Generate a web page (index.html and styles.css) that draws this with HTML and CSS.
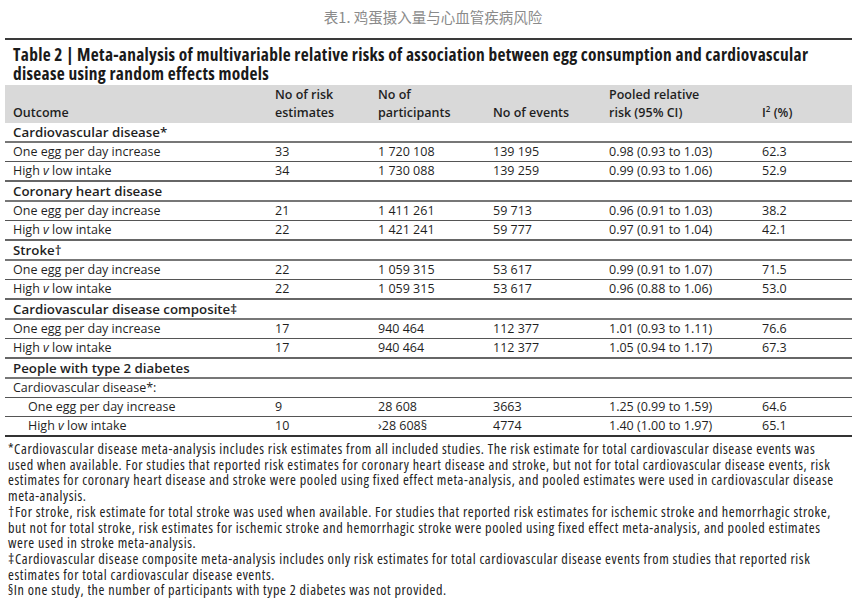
FILE: index.html
```html
<!DOCTYPE html>
<html>
<head>
<meta charset="utf-8">
<link rel="stylesheet" href="styles.css">
</head>
<body>
<div class="caption">表1. 鸡蛋摄入量与心血管疾病风险</div>
<div class="wrap">
  <div class="title">Table 2 | Meta-analysis of multivariable relative risks of association between egg consumption and cardiovascular disease using random effects models</div>
  <table class="tbl">
    <colgroup>
      <col class="c1"><col class="c2"><col class="c3"><col class="c4"><col class="c5"><col class="c6">
    </colgroup>
    <thead>
      <tr>
        <th>Outcome</th>
        <th>No of risk<br>estimates</th>
        <th>No of<br>participants</th>
        <th>No of events</th>
        <th>Pooled relative<br>risk (95% CI)</th>
        <th>I<sup>2</sup> (%)</th>
      </tr>
    </thead>
    <tbody>
      <tr class="sec"><td colspan="6">Cardiovascular disease*</td></tr>
      <tr><td>One egg per day increase</td><td>33</td><td>1 720 108</td><td>139 195</td><td>0.98 (0.93 to 1.03)</td><td>62.3</td></tr>
      <tr class="end"><td>High <i>v</i> low intake</td><td>34</td><td>1 730 088</td><td>139 259</td><td>0.99 (0.93 to 1.06)</td><td>52.9</td></tr>
      <tr class="sec"><td colspan="6">Coronary heart disease</td></tr>
      <tr><td>One egg per day increase</td><td>21</td><td>1 411 261</td><td>59 713</td><td>0.96 (0.91 to 1.03)</td><td>38.2</td></tr>
      <tr class="end"><td>High <i>v</i> low intake</td><td>22</td><td>1 421 241</td><td>59 777</td><td>0.97 (0.91 to 1.04)</td><td>42.1</td></tr>
      <tr class="sec"><td colspan="6">Stroke†</td></tr>
      <tr><td>One egg per day increase</td><td>22</td><td>1 059 315</td><td>53 617</td><td>0.99 (0.91 to 1.07)</td><td>71.5</td></tr>
      <tr class="end"><td>High <i>v</i> low intake</td><td>22</td><td>1 059 315</td><td>53 617</td><td>0.96 (0.88 to 1.06)</td><td>53.0</td></tr>
      <tr class="sec"><td colspan="6">Cardiovascular disease composite‡</td></tr>
      <tr><td>One egg per day increase</td><td>17</td><td>940 464</td><td>112 377</td><td>1.01 (0.93 to 1.11)</td><td>76.6</td></tr>
      <tr class="end"><td>High <i>v</i> low intake</td><td>17</td><td>940 464</td><td>112 377</td><td>1.05 (0.94 to 1.17)</td><td>67.3</td></tr>
      <tr class="sec"><td colspan="6">People with type 2 diabetes</td></tr>
      <tr><td colspan="6">Cardiovascular disease*:</td></tr>
      <tr><td class="ind">One egg per day increase</td><td>9</td><td>28 608</td><td>3663</td><td>1.25 (0.99 to 1.59)</td><td>64.6</td></tr>
      <tr class="last"><td class="ind">High <i>v</i> low intake</td><td>10</td><td>›28 608§</td><td>4774</td><td>1.40 (1.00 to 1.97)</td><td>65.1</td></tr>
    </tbody>
  </table>
  <div class="notes">
    <p>*Cardiovascular disease meta-analysis includes risk estimates from all included studies. The risk estimate for total cardiovascular disease events was used when available. For studies that reported risk estimates for coronary heart disease and stroke, but not for total cardiovascular disease events, risk estimates for coronary heart disease and stroke were pooled using fixed effect meta-analysis, and pooled estimates were used in cardiovascular disease meta-analysis.</p>
    <p>†For stroke, risk estimate for total stroke was used when available. For studies that reported risk estimates for ischemic stroke and hemorrhagic stroke, but not for total stroke, risk estimates for ischemic stroke and hemorrhagic stroke were pooled using fixed effect meta-analysis, and pooled estimates were used in stroke meta-analysis.</p>
    <p>‡Cardiovascular disease composite meta-analysis includes only risk estimates for total cardiovascular disease events from studies that reported risk estimates for total cardiovascular disease events.</p>
    <p>§In one study, the number of participants with type 2 diabetes was not provided.</p>
  </div>
</div>
</body>
</html>
```

FILE: styles.css
```css
html, body {
  margin: 0;
  padding: 0;
  background: #ffffff;
}
body {
  font-family: "Open Sans", "Noto Sans", sans-serif;
  color: #1f1f1f;
}
.caption {
  text-align: center;
  font-family: "Noto Sans CJK SC", "Noto Sans", sans-serif;
  font-size: 14.5px;
  color: #8a8a8a;
  height: 20px;
  line-height: 20px;
  padding-top: 7px;
  margin-bottom: 11px;
}
.wrap {
  margin-left: 5px;
  width: 847px;
}
.title {
  border-top: 2px solid #3a3a3a;
  font-family: "Open Sans", sans-serif;
  font-stretch: 75%;
  font-weight: 700;
  font-size: 17.4px;
  letter-spacing: 0.3px;
  line-height: 19px;
  padding: 5px 0 2px 8px;
  color: #1a1a1a;
}
.tbl {
  width: 847px;
  border-collapse: collapse;
  table-layout: fixed;
  font-size: 12.5px;
}
.c1 { width: 262px; }
.c2 { width: 103px; }
.c3 { width: 115px; }
.c4 { width: 116px; }
.c5 { width: 153px; }
.c6 { width: 98px; }
.tbl th {
  background: #d9d9d9;
  text-align: left;
  vertical-align: bottom;
  font-weight: 600;
  font-size: 12.5px;
  line-height: 18px;
  padding: 1px 0 1px 8px;
  height: 36px;
}
.tbl th sup {
  font-size: 8px;
  vertical-align: 5px;
  line-height: 0;
}
.tbl td {
  padding: 0 0 0 8px;
  height: 18px;
  line-height: 18px;
  border-bottom: 1px solid #555;
  font-weight: 400;
  white-space: nowrap;
}
.tbl tr.sec td {
  font-weight: 600;
  font-size: 13.3px;
  border-bottom: 2px solid #777;
}
.tbl tr.end td {
  border-bottom: 2px solid #666;
}
.tbl tr.last td {
  border-bottom: 2px solid #333;
}
.tbl td.ind {
  padding-left: 23px;
}
.notes {
  font-family: "Open Sans", sans-serif;
  font-stretch: 75%;
  font-size: 14.2px;
  letter-spacing: 0.58px;
  line-height: 15.7px;
  padding: 4px 17px 0 3px;
  color: #222;
}
.notes p {
  margin: 0;
}
```
